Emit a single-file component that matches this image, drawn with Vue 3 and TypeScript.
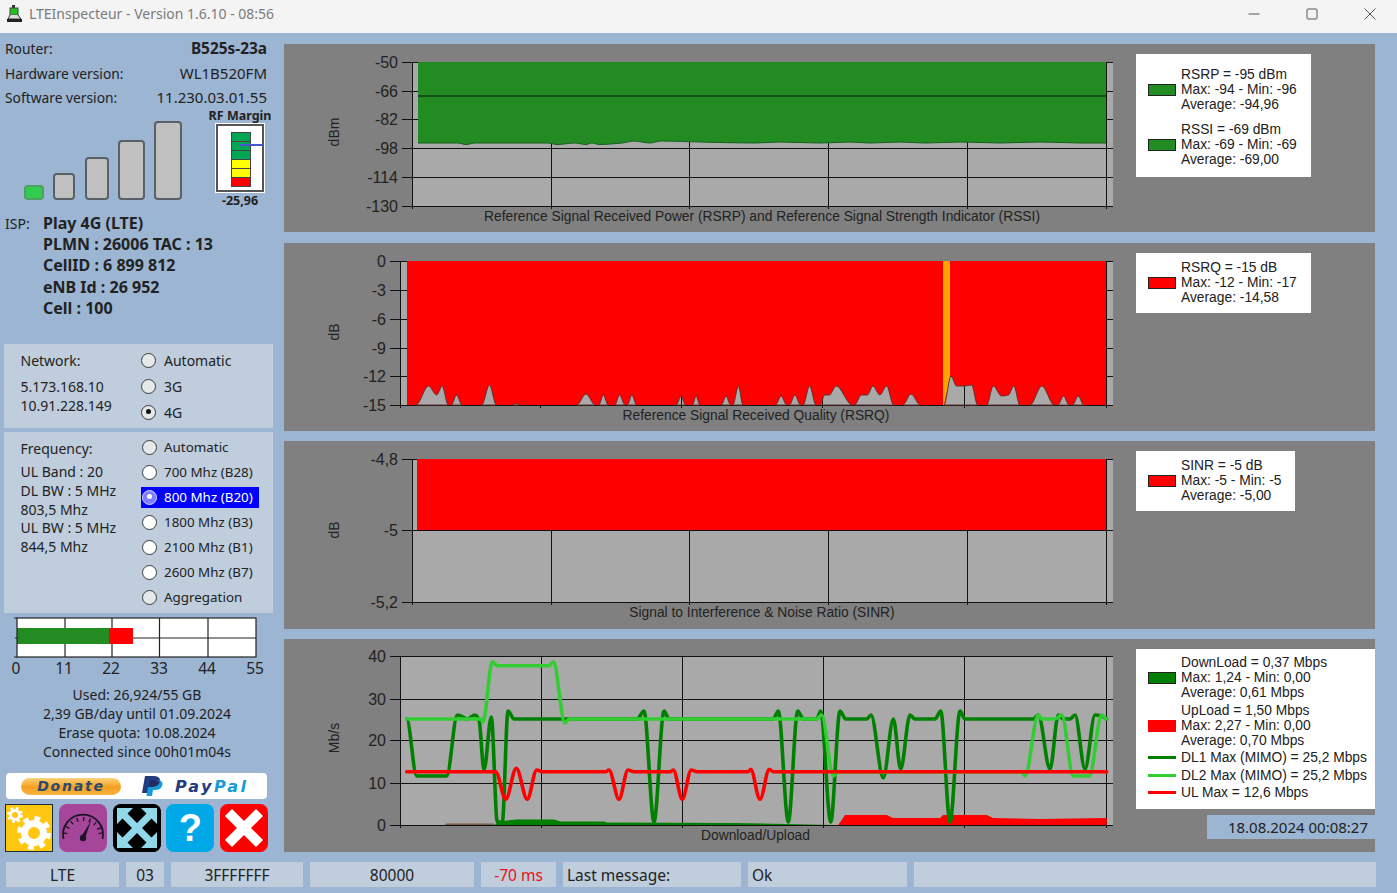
<script setup lang="ts">
type Pt = [number, number]

interface Tick { label: string; y: number }
interface Chart {
  id: string
  height: number
  viewBox: string
  axisX: number
  top: number
  bottom: number
  ticks: Tick[]
  grid: number[]
  unit: string
  unitY: number
  title: string
  titleX: number
  titleY: number
}

// monotone spline through the points, flat at every extreme so it never overshoots
function smooth(pts: Pt[]): string {
  const slopes = pts.map((p, i) => {
    const prev = pts[i - 1]
    const next = pts[i + 1]
    if (!prev || !next) return 0
    const a = (p[1] - prev[1]) / (p[0] - prev[0] || 1)
    const b = (next[1] - p[1]) / (next[0] - p[0] || 1)
    if (a * b <= 0) return 0
    return (2 * a * b) / (a + b)
  })
  let d = `M${pts[0][0]},${pts[0][1]}`
  for (let i = 0; i < pts.length - 1; i++) {
    const [x1, y1] = pts[i]
    const [x2, y2] = pts[i + 1]
    const h = (x2 - x1) / 3
    const c1y = y1 + slopes[i] * h
    const c2y = y2 - slopes[i + 1] * h
    d += ` C${(x1 + h).toFixed(1)},${c1y.toFixed(1)} ${(x2 - h).toFixed(1)},${c2y.toFixed(1)} ${x2},${y2}`
  }
  return d
}

const charts: Chart[] = [
  {
    id: 'rsrp', height: 188, viewBox: '284 44 852 188', axisX: 412, top: 62, bottom: 206,
    ticks: [
      { label: '-50', y: 62 }, { label: '-66', y: 91 }, { label: '-82', y: 119 },
      { label: '-98', y: 148 }, { label: '-114', y: 177 }, { label: '-130', y: 206 },
    ],
    grid: [551, 689, 828, 967, 1106], unit: 'dBm', unitY: 132,
    title: 'Reference Signal Received Power (RSRP) and Reference Signal Strength Indicator (RSSI)',
    titleX: 762, titleY: 221,
  },
  {
    id: 'rsrq', height: 188, viewBox: '284 243 852 188', axisX: 400, top: 261, bottom: 405,
    ticks: [
      { label: '0', y: 261 }, { label: '-3', y: 290 }, { label: '-6', y: 319 },
      { label: '-9', y: 348 }, { label: '-12', y: 376 }, { label: '-15', y: 405 },
    ],
    grid: [540, 681, 822, 964, 1106], unit: 'dB', unitY: 332,
    title: 'Reference Signal Received Quality (RSRQ)', titleX: 756, titleY: 420,
  },
  {
    id: 'sinr', height: 188, viewBox: '284 441 852 188', axisX: 412, top: 459, bottom: 602,
    ticks: [{ label: '-4,8', y: 459 }, { label: '-5', y: 530 }, { label: '-5,2', y: 602 }],
    grid: [551, 689, 828, 967, 1106], unit: 'dB', unitY: 530,
    title: 'Signal to Interference & Noise Ratio (SINR)', titleX: 762, titleY: 617,
  },
  {
    id: 'rate', height: 213, viewBox: '284 639 852 213', axisX: 400, top: 656, bottom: 825,
    ticks: [
      { label: '40', y: 656 }, { label: '30', y: 699 }, { label: '20', y: 740 },
      { label: '10', y: 783 }, { label: '0', y: 825 },
    ],
    grid: [541, 682, 823, 964, 1106], unit: 'Mb/s', unitY: 738,
    title: 'Download/Upload', titleX: 755.5, titleY: 840,
  },
]

const rsrpEdge: Pt[] = [
  [418, 143], [458, 143], [466, 144.5], [475, 143], [548, 143], [557, 144.5], [575, 143], [586, 144.5],
  [592, 143], [599, 144.5], [622, 143], [634, 141], [650, 143], [661, 141], [700, 142], [755, 143],
  [780, 142], [820, 143], [850, 142], [870, 143], [900, 142], [925, 143], [960, 142], [1000, 143],
  [1040, 142], [1080, 143], [1106, 143],
]
const rsrpPath = `${smooth(rsrpEdge)} L1106,62 L418,62 Z`

const qualityPeaks: Pt[][] = [
  [[416, 405], [428.5, 386], [436.7, 395], [442.2, 386], [448.2, 405]],
  [[451.4, 405], [456.5, 395], [462, 405]],
  [[481.7, 405], [489.5, 385], [496.4, 405]],
  [[512.5, 405], [516, 403.5], [519.4, 405]],
  [[576.8, 405], [586, 394], [595.1, 405]],
  [[598.8, 405], [603.4, 395], [608, 405]],
  [[614.9, 405], [619.5, 395], [625, 405]],
  [[627.3, 405], [631.9, 395], [636.5, 405]],
  [[676.4, 405], [681, 396], [685.6, 405]],
  [[692.5, 405], [696.1, 396], [699.8, 405]],
  [[721.4, 405], [726, 396], [730.6, 405]],
  [[732.9, 405], [738.4, 386], [743, 405]],
  [[775.6, 405], [781.1, 396], [786.6, 405]],
  [[789.4, 405], [794.9, 395], [800.4, 405]],
  [[803.1, 405], [809.6, 386], [816, 405]],
  [[820, 405], [824.7, 395], [829.3, 395], [836.2, 386], [852.3, 405]],
  [[854.5, 405], [861.4, 395], [867.4, 395], [872.9, 386], [879.8, 395], [886.7, 386], [893.6, 405]],
  [[902.8, 405], [911, 394], [920.2, 405]],
  [[944, 405], [951, 376], [956.5, 386], [963.8, 386], [971.6, 385], [977.6, 405]],
  [[986.8, 405], [993.2, 386], [1001.5, 396], [1008.4, 395], [1013.9, 386], [1019.8, 405]],
  [[1030, 405], [1041.9, 386], [1054.3, 405]],
  [[1058, 405], [1063.5, 396], [1069, 405]],
  [[1072.6, 405], [1078.2, 396], [1083.7, 405]],
]
const peakPaths = qualityPeaks.map((p) => smooth(p) + ' Z')
const redPath = 'M407,261 H1106 V405 H407 Z ' + peakPaths.join(' ')

const dl1: Pt[] = [
  [406.7, 719], [416.7, 776], [420, 776], [446.7, 776], [457.3, 715], [460.7, 716], [467.3, 719], [475, 715],
  [479, 720], [484, 770], [491.3, 717], [497.3, 822], [502.3, 822], [508, 711], [514, 719], [637.3, 719],
  [644, 711], [654, 822], [664, 711], [669, 719], [773.3, 719], [778.3, 711], [788.3, 822], [797.7, 711],
  [803.3, 719], [816.7, 719], [820.7, 711], [830.7, 822], [840, 711], [845.7, 719], [866.7, 719], [871, 715],
  [883.3, 778], [893.3, 719], [900.7, 769], [910, 715], [915, 719], [935, 719], [940.7, 711], [950, 822],
  [960, 711], [965, 719], [1033.3, 719], [1038.3, 715], [1050, 769], [1058.3, 715], [1063, 719], [1070, 719],
  [1075, 715], [1085, 769], [1095, 715], [1101.7, 716], [1106.7, 719],
]
const dl2: Pt[] = [
  [406.7, 719], [481, 719], [483, 722], [492.3, 661.7], [497.3, 665.7], [549, 665.7], [553.3, 661.7],
  [565, 723], [569, 719], [816.7, 719], [821.7, 715], [833.3, 776], [838, 772], [1021.7, 772], [1025, 776],
  [1038.3, 715], [1041.7, 719], [1055, 719], [1061.7, 715], [1073.3, 776], [1089.3, 776], [1101.7, 715],
  [1106.7, 719],
]
const ul: Pt[] = [
  [406.7, 771.7], [495.7, 771.7], [505.7, 799.3], [516.3, 768.3], [527.3, 799.3], [536.7, 770], [542.3, 771.7],
  [605.7, 771.7], [609, 770], [619, 799.3], [628, 770], [634, 771.7], [670.7, 771.7], [673.3, 770],
  [682.3, 799.3], [691.3, 770], [697.3, 771.7], [748.3, 771.7], [750.7, 769.3], [760, 799.3], [769.3, 769.3],
  [773.3, 771.7], [1106.7, 771.7],
]
const rateLines = [
  { id: 'dl1', color: '#008000', d: smooth(dl1) },
  { id: 'dl2', color: '#32cd32', d: smooth(dl2) },
  { id: 'ul', color: '#ff0000', d: smooth(ul) },
]
const dlFill =
  'M494,825 L500.7,821 517,819.5 554,819.5 560.7,821.5 604,821.5 607,822.5 733,823 833,825 Z'
const ulFill =
  'M838.3,825 L845,815 886.7,815 893,818 940,818 943,815 986.7,815 993,818 1040,819 1106.7,818 1106.7,825 Z'

interface LegendRow { kind: 'solid' | 'line'; color: string; text: string[]; outline?: boolean }
const legends: { id: string; spaced: string; rows: LegendRow[] }[] = [
  {
    id: 'rsrp', spaced: 'roomy', rows: [
      { kind: 'solid', color: '#228b22', outline: true, text: ['RSRP = -95 dBm', 'Max: -94 - Min: -96', 'Average: -94,96'] },
      { kind: 'solid', color: '#228b22', outline: true, text: ['RSSI = -69 dBm', 'Max: -69 - Min: -69', 'Average: -69,00'] },
    ],
  },
  { id: 'rsrq', spaced: 'tight', rows: [{ kind: 'solid', color: '#ff0000', outline: true, text: ['RSRQ = -15 dB', 'Max: -12 - Min: -17', 'Average: -14,58'] }] },
  { id: 'sinr', spaced: 'tight', rows: [{ kind: 'solid', color: '#ff0000', outline: true, text: ['SINR = -5 dB', 'Max: -5 - Min: -5', 'Average: -5,00'] }] },
  {
    id: 'rate', spaced: 'wide', rows: [
      { kind: 'solid', color: '#008000', outline: true, text: ['DownLoad = 0,37 Mbps', 'Max: 1,24 - Min: 0,00', 'Average: 0,61 Mbps'] },
      { kind: 'solid', color: '#ff0000', text: ['UpLoad = 1,50 Mbps', 'Max: 2,27 - Min: 0,00', 'Average: 0,70 Mbps'] },
      { kind: 'line', color: '#008000', text: ['DL1 Max (MIMO) = 25,2 Mbps'] },
      { kind: 'line', color: '#32cd32', text: ['DL2 Max (MIMO) = 25,2 Mbps'] },
      { kind: 'line', color: '#ff0000', text: ['UL Max = 12,6 Mbps'] },
    ],
  },
]

const infoRows = [
  { label: 'Router:', value: 'B525s-23a', bold: true },
  { label: 'Hardware version:', value: 'WL1B520FM', bold: false },
  { label: 'Software version:', value: '11.230.03.01.55', bold: false },
]
const signalBars = [
  { w: 20, h: 15, on: true },
  { w: 22, h: 27, on: false },
  { w: 24, h: 43, on: false },
  { w: 27, h: 60, on: false },
  { w: 28, h: 79, on: false },
]
const gaugeSegments = ['#00a651', '#00a651', '#00a651', '#ffff00', '#ffff00', '#ff0000']
const ispLines = ['Play 4G (LTE)', 'PLMN : 26006 TAC : 13', 'CellID : 6 899 812', 'eNB Id : 26 952', 'Cell : 100']

const networkModes = [
  { label: 'Automatic', checked: false },
  { label: '3G', checked: false },
  { label: '4G', checked: true },
]
const freqInfo = ['UL Band : 20', 'DL BW : 5 MHz', '803,5 Mhz', 'UL BW : 5 MHz', '844,5 Mhz']
const bands = [
  { label: 'Automatic', active: false, light: false },
  { label: '700 Mhz (B28)', active: false, light: true },
  { label: '800 Mhz (B20)', active: true, light: true },
  { label: '1800 Mhz (B3)', active: false, light: true },
  { label: '2100 Mhz (B1)', active: false, light: true },
  { label: '2600 Mhz (B7)', active: false, light: true },
  { label: 'Aggregation', active: false, light: false },
]
const quotaTicks = [
  { label: '0', x: 16 }, { label: '11', x: 64 }, { label: '22', x: 111 },
  { label: '33', x: 159 }, { label: '44', x: 207 }, { label: '55', x: 255 },
]
const quotaGrid = [65, 112, 159.5, 208]
const quotaLines = ['Used: 26,924/55 GB', '2,39 GB/day until 01.09.2024', 'Erase quota: 10.08.2024', 'Connected since 00h01m04s']
const gaugeTicks = [-78, -58, -38, -18, 2, 22, 42, 62, 78]
const statusCells = [
  { text: 'LTE', w: 113, cls: 'center' },
  { text: '03', w: 38, cls: 'center' },
  { text: '3FFFFFFF', w: 132, cls: 'center' },
  { text: '80000', w: 164, cls: 'center' },
  { text: '-70 ms', w: 75, cls: 'center alert' },
  { text: 'Last message:', w: 178, cls: 'left' },
  { text: 'Ok', w: 159, cls: 'left' },
  { text: '', w: 462, cls: 'left' },
]
</script>

<template>
  <div class="window">
    <header class="titlebar">
      <svg class="app-icon" width="16" height="18" viewBox="0 0 16 18">
        <rect x="5" y="0" width="3" height="4" fill="#333" />
        <rect x="3" y="3" width="8" height="7" fill="#22c322" stroke="#444" stroke-width="1" />
        <path d="M3 10 L1 14 H14 L11 10" fill="#ddd" stroke="#333" />
        <rect x="0" y="14" width="15" height="3" fill="#222" />
      </svg>
      <span class="app-title">LTEInspecteur - Version 1.6.10 - 08:56</span>
      <div class="win-controls">
        <svg width="12" height="12" viewBox="0 0 12 12"><path d="M0.5 6 H11.5" stroke="#555" /></svg>
        <svg width="12" height="12" viewBox="0 0 12 12"><rect x="1" y="1" width="10" height="10" rx="1" fill="none" stroke="#555" /></svg>
        <svg width="12" height="12" viewBox="0 0 12 12"><path d="M0.5 0.5 L11.5 11.5 M11.5 0.5 L0.5 11.5" stroke="#555" /></svg>
      </div>
    </header>

    <div class="body">
      <aside class="side">
        <div v-for="row in infoRows" :key="row.label" class="info-row">
          <span>{{ row.label }}</span>
          <span class="info-value" :class="{ strong: row.bold }">{{ row.value }}</span>
        </div>

        <div class="signal">
          <div class="bars">
            <span
              v-for="(bar, i) in signalBars"
              :key="i"
              class="bar"
              :class="{ on: bar.on }"
              :style="{ width: bar.w + 'px', height: bar.h + 'px' }"
            />
          </div>
          <div class="margin">
            <div class="margin-label">RF Margin</div>
            <div class="gauge">
              <div class="gauge-stack">
                <span v-for="(c, i) in gaugeSegments" :key="i" :style="{ background: c }" />
              </div>
              <span class="gauge-needle" />
            </div>
            <div class="margin-label">-25,96</div>
          </div>
        </div>

        <div class="isp">
          <span class="isp-label">ISP:</span>
          <div class="isp-lines">
            <div v-for="line in ispLines" :key="line">{{ line }}</div>
          </div>
        </div>

        <section class="box net-box">
          <div class="box-info">
            <div class="box-head">Network:</div>
            <div>5.173.168.10</div>
            <div>10.91.228.149</div>
          </div>
          <div class="radios">
            <div v-for="m in networkModes" :key="m.label" class="radio-row net-row">
              <span class="radio" :class="{ checked: m.checked }" />
              <span>{{ m.label }}</span>
            </div>
          </div>
        </section>

        <section class="box freq-box">
          <div class="box-info">
            <div class="box-head freq-head">Frequency:</div>
            <div v-for="f in freqInfo" :key="f">{{ f }}</div>
          </div>
          <div class="radios">
            <div v-for="b in bands" :key="b.label" class="radio-row band-row">
              <div class="band" :class="{ active: b.active }">
                <span class="radio" :class="{ checked: b.active, light: b.light }" />
                <span>{{ b.label }}</span>
              </div>
            </div>
          </div>
        </section>

        <svg class="quota" width="270" height="64" viewBox="0 617 270 64">
          <rect x="17" y="618" width="239" height="39" fill="#fff" />
          <line v-for="x in quotaGrid" :key="x" :x1="x" :x2="x" y1="618" y2="657" stroke="#222" stroke-width="1.2" />
          <line x1="15" x2="256" y1="638" y2="638" stroke="#222" stroke-width="1.2" />
          <rect x="17" y="628" width="92" height="16" fill="#228b22" />
          <rect x="109" y="628" width="24" height="16" fill="#ff0000" />
          <rect x="17" y="618" width="239" height="39" fill="none" stroke="#222" stroke-width="1.2" />
          <path d="M14 618 H17 M14 657 H17" stroke="#222" stroke-width="1.2" />
          <text v-for="t in quotaTicks" :key="t.label" :x="t.x" y="674" class="quota-tick">{{ t.label }}</text>
        </svg>

        <div class="quota-text">
          <div v-for="line in quotaLines" :key="line">{{ line }}</div>
        </div>

        <button type="button" class="donate">
          <span class="donate-pill">Donate</span>
          <span class="paypal">
            <svg width="24" height="20" viewBox="0 0 24 20">
              <path d="M5 0 H14 C20 0 21 4 19.5 7 C18 10 15 11 11 11 H9 L7.8 17 H2 Z" fill="#253b80" />
              <path d="M9 4 H17 C22 4 23.5 7 22 10 C21 13 18 14 15 14 H13 L12 20 H6.5 Z" fill="#179bd7" />
              <path d="M9 4 H15 C18 4 19.5 5 19.6 6.5 C18 10 15 11 11 11 H9 L8 11 Z" fill="#222d65" />
            </svg>
            <span class="pp-text"><span class="pp-dark">Pay</span><span class="pp-light">Pal</span></span>
          </span>
        </button>

        <div class="tools">
          <button type="button" class="tool tool-settings">
            <svg width="46" height="46" viewBox="0 0 46 46">
              <circle cx="28" cy="28" r="9.5" fill="none" stroke="#fff" stroke-width="7" />
              <circle cx="28" cy="28" r="14.5" fill="none" stroke="#fff" stroke-width="5" stroke-dasharray="5.69 5.69" />
              <circle cx="9" cy="10" r="4.5" fill="none" stroke="#fff" stroke-width="3" />
              <circle cx="9" cy="10" r="6.5" fill="none" stroke="#fff" stroke-width="3" stroke-dasharray="2.55 2.55" />
            </svg>
          </button>
          <button type="button" class="tool tool-speed">
            <svg width="48" height="48" viewBox="0 0 48 48">
              <path d="M4.5 35 A20 20 0 1 1 43.5 35" fill="none" stroke="#1c1424" stroke-width="1.8" />
              <g stroke="#1c1424" stroke-width="1.4">
                <line v-for="a in gaugeTicks" :key="a" x1="24" y1="13" x2="24" y2="17" :transform="`rotate(${a} 24 33)`" />
              </g>
              <path d="M22 33 L32 17 L26 34 Z" fill="#1c1424" />
              <circle cx="24" cy="34" r="3.2" fill="#1c1424" />
            </svg>
          </button>
          <button type="button" class="tool tool-expand">
            <svg width="48" height="48" viewBox="0 0 48 48">
              <rect x="0" y="0" width="48" height="48" rx="8" fill="#000" />
              <g fill="#8fd8ea">
                <path d="M4 4 H20 L14.5 9.5 L24 19 L33.5 9.5 L28 4 H44 V20 L38.5 14.5 L29 24 L38.5 33.5 L44 28 V44 H28 L33.5 38.5 L24 29 L14.5 38.5 L20 44 H4 V28 L9.5 33.5 L19 24 L9.5 14.5 L4 20 Z" />
              </g>
            </svg>
          </button>
          <button type="button" class="tool tool-help">?</button>
          <button type="button" class="tool tool-close">
            <svg width="48" height="48" viewBox="0 0 48 48">
              <path d="M12 12 L36 36 M36 12 L12 36" stroke="#fff" stroke-width="10" stroke-linecap="square" />
            </svg>
          </button>
        </div>
      </aside>

      <main class="charts">
        <section v-for="(chart, i) in charts" :key="chart.id" class="panel" :style="{ height: chart.height + 'px' }">
          <svg class="plot" width="852" :height="chart.height" :viewBox="chart.viewBox">
            <rect :x="chart.axisX" :y="chart.top" :width="1113 - chart.axisX" :height="chart.bottom - chart.top" fill="#a9a9a9" />
            <line
              v-for="t in chart.ticks"
              :key="t.label"
              :x1="chart.axisX - 10"
              x2="1113"
              :y1="t.y"
              :y2="t.y"
              class="grid"
            />
            <line
              v-for="x in chart.grid"
              :key="x"
              :x1="x"
              :x2="x"
              :y1="chart.top"
              :y2="chart.bottom + 3"
              class="grid"
            />
            <line :x1="chart.axisX" :x2="chart.axisX" :y1="chart.top" :y2="chart.bottom + 3" class="grid" />

            <template v-if="chart.id === 'rsrp'">
              <path :d="rsrpPath" fill="#228b22" />
              <path :d="smooth(rsrpEdge)" fill="none" stroke="#14601a" stroke-width="1" />
              <line x1="418" x2="1106" y1="96" y2="96" stroke="#123d17" stroke-width="1.3" />
            </template>
            <template v-else-if="chart.id === 'rsrq'">
              <path :d="redPath" fill="#ff0000" fill-rule="evenodd" />
              <path d="M943,261 H950 V378 L944,405 H943 Z" fill="#ffa500" />
              <path v-for="(d, j) in peakPaths" :key="j" :d="d" fill="none" stroke="#5c2a2a" stroke-width="0.9" />
            </template>
            <template v-else-if="chart.id === 'sinr'">
              <rect x="417" y="459" width="689" height="71" fill="#ff0000" />
            </template>
            <template v-else>
              <path d="M445,825 L446,823.5 494,823.5 494,825 Z" fill="#7a5a4a" />
              <path :d="dlFill" fill="#008000" />
              <path :d="ulFill" fill="#ff0000" />
              <path
                v-for="l in rateLines"
                :key="l.id"
                :d="l.d"
                fill="none"
                :stroke="l.color"
                stroke-width="3.6"
                stroke-linejoin="round"
                stroke-linecap="round"
              />
            </template>

            <text
              v-for="t in chart.ticks"
              :key="'l' + t.label"
              :x="chart.axisX - 14"
              :y="t.y + 5.5"
              class="tick-label"
            >{{ t.label }}</text>
            <text :transform="`translate(339 ${chart.unitY}) rotate(-90)`" class="unit">{{ chart.unit }}</text>
            <text :x="chart.titleX" :y="chart.titleY" class="chart-title">{{ chart.title }}</text>
          </svg>

          <div class="legend-col">
            <div class="legend" :class="legends[i].spaced">
              <div v-for="row in legends[i].rows" :key="row.text[0]" class="legend-row">
                <span
                  class="swatch"
                  :class="[row.kind, { outline: row.outline }]"
                  :style="{ background: row.color }"
                />
                <div class="legend-text">
                  <div v-for="t in row.text" :key="t">{{ t }}</div>
                </div>
              </div>
            </div>
            <div v-if="chart.id === 'rate'" class="stamp">18.08.2024 00:08:27</div>
          </div>
        </section>
      </main>
    </div>

    <footer class="status">
      <div
        v-for="(cell, i) in statusCells"
        :key="i"
        class="status-cell"
        :class="cell.cls"
        :style="{ width: cell.w + 'px' }"
      >{{ cell.text }}</div>
    </footer>
  </div>
</template>

<style>
html, body { margin: 0; background: #9bb5d3; }
</style>

<style scoped>
.window {
  display: flex;
  flex-direction: column;
  width: 1397px;
  height: 893px;
  background: #9bb5d3;
  font-family: "Noto Sans", "Liberation Sans", sans-serif;
  font-size: 14px;
  color: #222;
  overflow: hidden;
}

.titlebar {
  display: flex;
  align-items: center;
  height: 33px;
  flex: none;
  padding: 0 0 6px 7px;
  box-sizing: border-box;
  background: #f4f4f4;
}
.app-icon { margin-right: 6px; }
.app-title { color: #7b7b7b; font-size: 14px; }
.win-controls {
  margin-left: auto;
  display: flex;
  gap: 46px;
  padding-right: 21px;
}

.body { display: flex; flex: none; height: 829px; }

.side { width: 284px; flex: none; padding-top: 4px; box-sizing: border-box; }
.info-row {
  display: flex;
  justify-content: space-between;
  height: 24.5px;
  line-height: 24px;
  padding: 0 17px 0 5px;
  font-size: 13.8px;
}
.info-value { font-size: 15px; line-height: 23px; }
.strong { font-weight: 700; font-size: 15.4px; }

.signal { display: flex; margin-top: -2.5px; height: 100px; }
.bars {
  display: flex;
  align-items: flex-end;
  gap: 9.25px;
  height: 92px;
  margin-left: 24px;
}
.bar {
  box-sizing: border-box;
  background: #c0c0c0;
  border: 2px solid #5a6068;
  border-radius: 4px;
  display: block;
}
.bar.on { background: #32cd50; border-color: #4f9e62; }
.margin {
  width: 64px;
  margin-left: 26px;
  display: flex;
  flex-direction: column;
  align-items: center;
}
.margin-label {
  font-size: 12.5px;
  font-weight: 700;
  line-height: 15px;
  white-space: nowrap;
}
.gauge {
  position: relative;
  box-sizing: border-box;
  width: 48px;
  height: 69px;
  margin: 1px 0;
  padding: 6px 0 0 13px;
  background: #fff;
  border: 2px solid #555;
  outline: 1px solid #fff;
}
.gauge-stack {
  width: 20px;
  height: 55px;
  display: flex;
  flex-direction: column;
  background: #444;
  padding: 1px;
  box-sizing: border-box;
  gap: 1px;
}
.gauge-stack span { flex: 1; }
.gauge-needle {
  position: absolute;
  left: 21px;
  top: 18px;
  width: 24px;
  height: 2px;
  background: #4a55d0;
}

.isp { display: flex; margin-top: 5px; padding-left: 5px; height: 106.5px; }
.isp-label { width: 38px; line-height: 21.2px; }
.isp-lines { font-weight: 700; font-size: 16px; line-height: 21.2px; }

.box {
  display: flex;
  box-sizing: border-box;
  width: 269px;
  margin-left: 4px;
  background: #bfcddd;
}
.net-box { height: 84px; margin-top: 24.5px; }
.freq-box { height: 181px; margin-top: 4px; }
.box-info { width: 137px; padding-left: 16.5px; box-sizing: border-box; line-height: 19px; }
.freq-box .box-info { line-height: 18.75px; }
.box-head { line-height: 34px; }
.freq-box .freq-head { line-height: 34px; margin-bottom: -3px; }
.net-box .box-info > div:nth-child(2) { margin-top: -1px; }
.radios { display: flex; flex-direction: column; }
.net-box .radios { padding-top: 3px; }
.freq-box .radios { padding-top: 2.5px; }
.radio-row { display: flex; align-items: center; gap: 8px; }
.net-row { height: 26px; }
.band-row { height: 25px; font-size: 13.4px; }
.band {
  display: flex;
  align-items: center;
  gap: 7px;
  height: 21px;
  width: 118px;
  box-sizing: border-box;
  padding-left: 1px;
  white-space: nowrap;
}
.band.active { background: #0000ff; color: #fff; }
.radio {
  position: relative;
  box-sizing: border-box;
  display: block;
  width: 15px;
  height: 15px;
  flex: none;
  border-radius: 50%;
  border: 1.3px solid #3a3a3a;
  background: #e6e8ea;
}
.radio.light { background: #fff; }
.radio.checked::after {
  content: '';
  position: absolute;
  left: 3.7px;
  top: 3.7px;
  width: 5px;
  height: 5px;
  border-radius: 50%;
  background: #111;
}
.band.active .radio { background: #7f7fff; border-color: #d8d8ff; }
.band.active .radio::after { background: #fff; }

.quota { display: block; margin-top: 4px; }
.quota-tick {
  font-family: "Noto Sans", sans-serif;
  font-size: 15.5px;
  fill: #222;
  text-anchor: middle;
}
.quota-text {
  width: 274px;
  margin-top: 3.5px;
  text-align: center;
  line-height: 19px;
}

.donate {
  display: flex;
  align-items: center;
  width: 261px;
  height: 26px;
  margin: 12.5px 0 0 6px;
  padding: 0 0 0 15px;
  box-sizing: border-box;
  background: #fff;
  border: none;
  border-radius: 4px;
}
.donate-pill {
  width: 100px;
  height: 17px;
  line-height: 17px;
  border-radius: 9px;
  text-align: center;
  background: linear-gradient(#fcd27a, #f59f1e 55%, #f9b443);
  color: #2a4a70;
  font-family: "DejaVu Sans", sans-serif;
  font-style: italic;
  font-weight: 700;
  font-size: 14px;
  letter-spacing: 1.8px;
}
.paypal { display: flex; align-items: center; margin-left: 19px; }
.pp-text {
  margin-left: 11px;
  font-family: "DejaVu Sans", sans-serif;
  font-style: italic;
  font-weight: 700;
  font-size: 16px;
  letter-spacing: 2.5px;
}
.pp-dark { color: #253b80; }
.pp-light { color: #179bd7; }

.tools { display: flex; gap: 5.75px; margin: 5px 0 0 5px; width: 268px; }
.tool {
  width: 48px;
  height: 48px;
  padding: 0;
  border: none;
  border-radius: 8px;
  display: flex;
  align-items: center;
  justify-content: center;
  overflow: hidden;
}
.tool-settings { background: #ffc70f; border: 1px solid #1a2a3a; border-radius: 0; box-sizing: border-box; }
.tool-speed { background: #a5469b; }
.tool-expand { background: #000; }
.tool-help {
  background: #00a8e8;
  color: #fff;
  font-family: "Liberation Sans", sans-serif;
  font-weight: 700;
  font-size: 38px;
}
.tool-close { background: #ff0000; }

.charts {
  width: 1091px;
  flex: none;
  padding-top: 11px;
  display: flex;
  flex-direction: column;
  gap: 10px;
}
.panel {
  display: flex;
  flex: none;
  background: #808080;
}
.panel:nth-child(2) { margin-top: 1px; }
.plot { display: block; flex: none; }
.grid { stroke: #111; stroke-width: 1; shape-rendering: crispEdges; }
.tick-label {
  font-family: "Liberation Sans", sans-serif;
  font-size: 16px;
  fill: #222;
  text-anchor: end;
}
.unit {
  font-family: "Liberation Sans", sans-serif;
  font-size: 14px;
  fill: #222;
  text-anchor: middle;
}
.chart-title {
  font-family: "Liberation Sans", sans-serif;
  font-size: 13.8px;
  fill: #222;
  text-anchor: middle;
}

.legend-col {
  width: 239px;
  padding-top: 10px;
  display: flex;
  flex-direction: column;
  align-items: flex-start;
}
.legend {
  background: #fff;
  font-family: "Liberation Sans", sans-serif;
  font-size: 13.8px;
  line-height: 15px;
  color: #222;
  padding: 13px 14px 10px 12px;
  display: flex;
  flex-direction: column;
}
.legend.roomy { gap: 10px; }
.legend.tight { padding: 7px 14px 8px 12px; }
.legend.wide {
  align-self: stretch;
  padding: 6px 9px 7.5px 12px;
  white-space: nowrap;
}
.legend.wide .legend-row:nth-child(n + 3) { height: 17.5px; }
.legend.wide .legend-row:nth-child(2) { margin-top: 3px; margin-bottom: 1px; }
.legend-row { display: flex; align-items: center; }
.swatch { width: 28px; flex: none; margin-right: 5px; box-sizing: border-box; }
.swatch.solid { height: 12px; }
.swatch.outline { border: 1px solid #222; }
.swatch.line { height: 3px; }
.stamp {
  align-self: stretch;
  margin: 6px 0 0 71px;
  height: 24px;
  line-height: 25px;
  padding-right: 7px;
  text-align: right;
  background: #9bb5d3;
  font-size: 15px;
}

.status {
  display: flex;
  gap: 7px;
  padding: 0 0 0 6px;
  height: 25px;
  flex: none;
  font-size: 15.5px;
}
.status-cell {
  flex: none;
  height: 25px;
  line-height: 26px;
  background: #bfcddd;
  box-sizing: border-box;
}
.center { text-align: center; }
.left { padding-left: 4px; }
.alert { color: #e11; }
</style>
